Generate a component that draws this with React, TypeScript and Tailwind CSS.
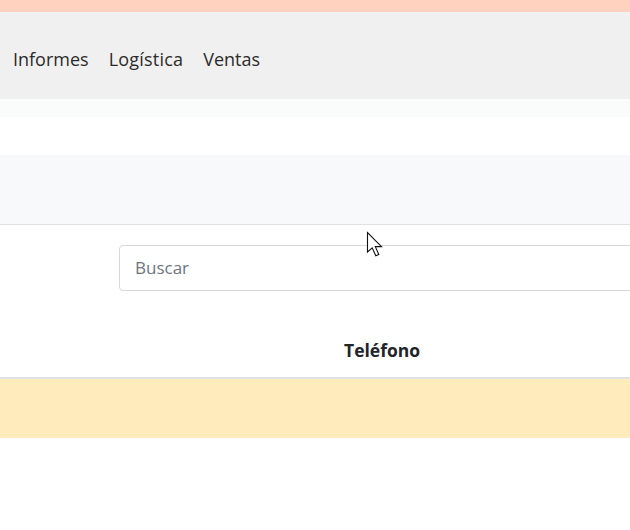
import React from 'react';

const Cursor: React.FC = () => (
  <svg
    className="absolute left-[366px] top-[231px]"
    width="20"
    height="28"
    viewBox="0 0 20 28"
    fill="none"
  >
    <path
      d="M1.5 1.5 L1.5 21 L6.2 16.8 L9.8 24.8 L12.8 23.5 L9.3 15.6 L15.5 15.6 Z"
      fill="#ffffff"
      stroke="#111111"
      strokeWidth="1.1"
      strokeLinejoin="miter"
    />
  </svg>
);

const App: React.FC = () => {
  return (
    <div className="relative w-[630px] h-[530px] overflow-hidden bg-white font-['Open_Sans',sans-serif]">
      <div className="h-[12px] bg-[#ffd2bf]" />

      <nav className="h-[87px] bg-[#f0f0f0] flex items-center pl-[13px] pt-[8px] gap-[20px] text-[18px] text-[#2b2b2b]">
        <span>Informes</span>
        <span className="tracking-[0.2px]">Logística</span>
        <span>Ventas</span>
      </nav>

      <div className="h-[18px] bg-[#fafbfb]" />
      <div className="h-[38px] bg-white" />

      <div className="h-[70px] bg-[#f8f9fa] border-b border-[#dee2e6]" />

      <div className="pt-[20px] pl-[119px]">
        <div className="h-[46px] w-[560px] rounded-[4px] border border-[#d6d9dc] bg-white flex items-center px-[15px]">
          <span className="text-[17px] text-[#6c757d]">Buscar</span>
        </div>
      </div>

      <div className="h-[88px] flex items-end pl-[344px] pb-[14px] border-b-2 border-[#dee2e6]">
        <span className="text-[17.5px] font-bold text-[#212529]">Teléfono</span>
      </div>

      <div className="h-[59px] bg-[#ffebbc]" />

      <Cursor />
    </div>
  );
};

export default App;
